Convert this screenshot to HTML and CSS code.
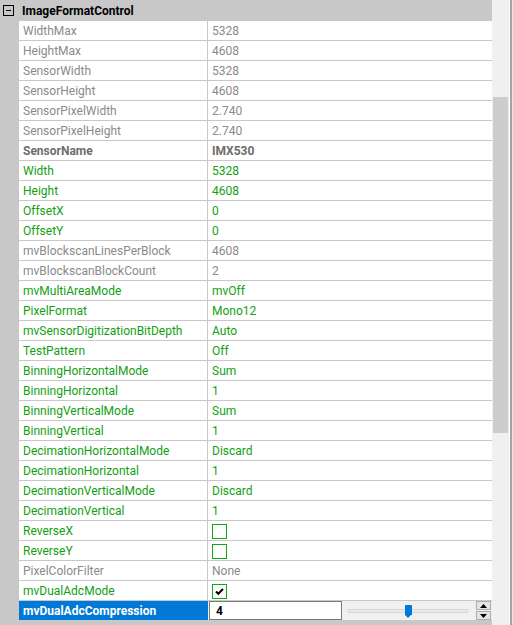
FILE: index.html
```html
<!DOCTYPE html>
<html>
<head>
<meta charset="utf-8">
<link rel="stylesheet" href="styles.css">
</head>
<body>
<div class="wrap">
  <div class="grid">
    <div class="header">
      <span class="expander"><span class="minus"></span></span>
      <span class="htitle">ImageFormatControl</span>
    </div>
    <div class="rows">
      <div class="row ro"><div class="name">WidthMax</div><div class="val">5328</div></div>
      <div class="row ro"><div class="name">HeightMax</div><div class="val">4608</div></div>
      <div class="row ro"><div class="name">SensorWidth</div><div class="val">5328</div></div>
      <div class="row ro"><div class="name">SensorHeight</div><div class="val">4608</div></div>
      <div class="row ro"><div class="name">SensorPixelWidth</div><div class="val">2.740</div></div>
      <div class="row ro"><div class="name">SensorPixelHeight</div><div class="val">2.740</div></div>
      <div class="row ro bold"><div class="name">SensorName</div><div class="val">IMX530</div></div>
      <div class="row rw"><div class="name">Width</div><div class="val">5328</div></div>
      <div class="row rw"><div class="name">Height</div><div class="val">4608</div></div>
      <div class="row rw"><div class="name">OffsetX</div><div class="val">0</div></div>
      <div class="row rw"><div class="name">OffsetY</div><div class="val">0</div></div>
      <div class="row ro"><div class="name">mvBlockscanLinesPerBlock</div><div class="val">4608</div></div>
      <div class="row ro"><div class="name">mvBlockscanBlockCount</div><div class="val">2</div></div>
      <div class="row rw"><div class="name">mvMultiAreaMode</div><div class="val">mvOff</div></div>
      <div class="row rw"><div class="name">PixelFormat</div><div class="val">Mono12</div></div>
      <div class="row rw"><div class="name">mvSensorDigitizationBitDepth</div><div class="val">Auto</div></div>
      <div class="row rw"><div class="name">TestPattern</div><div class="val">Off</div></div>
      <div class="row rw"><div class="name">BinningHorizontalMode</div><div class="val">Sum</div></div>
      <div class="row rw"><div class="name">BinningHorizontal</div><div class="val">1</div></div>
      <div class="row rw"><div class="name">BinningVerticalMode</div><div class="val">Sum</div></div>
      <div class="row rw"><div class="name">BinningVertical</div><div class="val">1</div></div>
      <div class="row rw"><div class="name">DecimationHorizontalMode</div><div class="val">Discard</div></div>
      <div class="row rw"><div class="name">DecimationHorizontal</div><div class="val">1</div></div>
      <div class="row rw"><div class="name">DecimationVerticalMode</div><div class="val">Discard</div></div>
      <div class="row rw"><div class="name">DecimationVertical</div><div class="val">1</div></div>
      <div class="row rw"><div class="name">ReverseX</div><div class="val"><span class="check"></span></div></div>
      <div class="row rw"><div class="name">ReverseY</div><div class="val"><span class="check"></span></div></div>
      <div class="row ro"><div class="name">PixelColorFilter</div><div class="val">None</div></div>
      <div class="row rw"><div class="name">mvDualAdcMode</div><div class="val"><span class="check"><svg width="11" height="11" viewBox="0 0 11 11"><path d="M2 5.5 L4.3 7.8 L9 3" fill="none" stroke="#000" stroke-width="2"/></svg></span></div></div>
      <div class="row sel">
        <div class="name">mvDualAdcCompression</div>
        <div class="editor">
          <div class="textbox">4</div>
          <div class="slider">
            <div class="track"><span class="thumb"></span></div>
          </div>
          <div class="spin">
            <div class="sbtn"><svg width="7" height="4" viewBox="0 0 7 4"><path d="M0 4 L3.5 0 L7 4 Z" fill="#000"/></svg></div>
            <div class="sbtn"><svg width="7" height="4" viewBox="0 0 7 4"><path d="M0 0 L3.5 4 L7 0 Z" fill="#000"/></svg></div>
          </div>
        </div>
      </div>
    </div>
    <div class="footer"></div>
  </div>
  <div class="scrollbar">
    <div class="sbtrack"><div class="sbthumb"></div></div>
    <div class="sbline1"></div>
    <div class="sbline2"></div>
    <div class="sbline3"></div>
  </div>
</div>
</body>
</html>
```
FILE: styles.css
```css
html, body {
  margin: 0;
  padding: 0;
}
body {
  width: 513px;
  height: 625px;
  overflow: hidden;
  background: #c8c8c8;
  font-family: Roboto, "Noto Sans", sans-serif;
  font-size: 12px;
}
.wrap {
  display: flex;
  width: 513px;
  height: 625px;
}
.grid {
  width: 492px;
  display: flex;
  flex-direction: column;
  background: #c8c8c8;
}
.header {
  height: 21px;
  display: flex;
  align-items: center;
  background: #c8c8c8;
}
.expander {
  width: 22px;
  display: flex;
  padding-left: 3px;
  box-sizing: border-box;
}
.minus {
  width: 9px;
  height: 9px;
  border: 1px solid #000;
  position: relative;
}
.minus::after {
  content: "";
  position: absolute;
  left: 2px;
  top: 4px;
  width: 5px;
  height: 1px;
  background: #000;
}
.htitle {
  font-weight: bold;
  color: #000;
}
.rows {
  padding-left: 19px;
  display: flex;
  flex-direction: column;
}
.row {
  display: grid;
  grid-template-columns: 189px 284px;
  height: 20px;
  box-sizing: border-box;
  border-bottom: 1px solid #c8c8c8;
  background: #fff;
}
.name {
  border-right: 1px solid #c8c8c8;
  padding-left: 4px;
  padding-top: 1px;
  display: flex;
  align-items: center;
  white-space: nowrap;
  overflow: hidden;
}
.val {
  padding-left: 4px;
  padding-top: 1px;
  display: flex;
  align-items: center;
  white-space: nowrap;
}
.ro { color: #8a8a8a; }
.ro.bold { color: #6d6d6d; font-weight: bold; }
.rw { color: #12a012; }
.check {
  width: 15px;
  height: 15px;
  border: 1px solid #10a810;
  box-sizing: border-box;
  display: flex;
  align-items: center;
  justify-content: center;
  background: #fff;
  align-self: flex-start;
  margin-top: 2px;
}
.sel {
  border-bottom: none;
  height: 19px;
  background: #f0f0f0;
}
.sel .name {
  background: #0078d7;
  color: #fff;
  font-weight: bold;
  border-right: none;
  padding-top: 0;
}
.editor {
  display: flex;
  align-items: center;
  padding-left: 1px;
  height: 19px;
  background: #f0f0f0;
}
.textbox {
  width: 133px;
  height: 19px;
  flex: none;
  box-sizing: border-box;
  border: 1px solid #7a7a7a;
  background: #fff;
  color: #000;
  font-weight: bold;
  font-size: 12px;
  padding-left: 6px;
  display: flex;
  align-items: center;
}
.slider {
  width: 134px;
  flex: none;
  box-sizing: border-box;
  padding-left: 6px;
  display: flex;
  align-items: center;
}
.track {
  position: relative;
  width: 120px;
  height: 4px;
  box-sizing: border-box;
  background: #e7eaea;
  border: 1px solid #d6d6d6;
}
.thumb {
  position: absolute;
  left: 56px;
  top: -5px;
  width: 7px;
  height: 10px;
  background: #0078d7;
  border-radius: 1px 1px 0 0;
}
.thumb::after {
  content: "";
  position: absolute;
  left: 0;
  top: 10px;
  border-left: 3.5px solid transparent;
  border-right: 3.5px solid transparent;
  border-top: 3px solid #0078d7;
}
.spin {
  display: flex;
  flex-direction: column;
  gap: 1px;
  flex: none;
}
.sbtn {
  width: 15px;
  height: 9px;
  box-sizing: border-box;
  border: 1px solid #adadad;
  background: #e5e5e5;
  display: flex;
  align-items: center;
  justify-content: center;
}
.footer {
  height: 5px;
  background: #c8c8c8;
}
.scrollbar {
  width: 21px;
  display: flex;
  height: 625px;
}
.sbtrack {
  width: 17px;
  background: #f0f0f0;
  padding-top: 97px;
  padding-left: 1px;
  box-sizing: border-box;
}
.sbthumb {
  width: 15px;
  height: 336px;
  background: #cdcdcd;
}
.sbline1 { width: 1px; background: #fafafa; }
.sbline2 { width: 2px; background: #a3a3ab; }
.sbline3 { width: 1px; background: #e8e8e8; }
```
